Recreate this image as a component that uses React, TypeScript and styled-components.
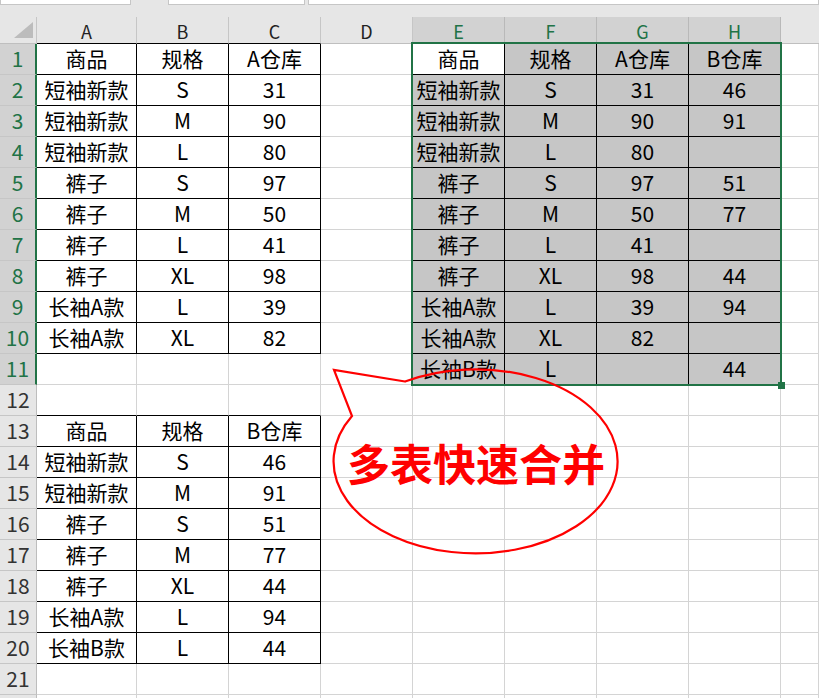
import React from "react";
import styled, { createGlobalStyle } from "styled-components";

const GREEN = "#217346";
const GRID = "#d4d4d4";
const FONT = `"Noto Sans CJK SC", "Noto Sans", sans-serif`;

const Global = createGlobalStyle`
  html, body { margin: 0; padding: 0; background: #fff; overflow: hidden; }
  body { font-family: ${FONT}; }
`;

const Page = styled.div`
  position: relative;
  width: 819px;
  height: 698px;
  overflow: hidden;
  background: #e6e6e6;
`;

const TopStrip = styled.div`
  display: flex;
  height: 17px;
  background: #e6e6e6;
`;

const InputBox = styled.div<{ $w: string; $ml: number }>`
  box-sizing: border-box;
  flex: ${(p) => (p.$w === "fill" ? "1" : `0 0 ${p.$w}`)};
  margin-left: ${(p) => p.$ml}px;
  height: 5px;
  background: #fff;
  border: 1px solid #c6c6c6;
  border-top: none;
`;

const Sheet = styled.div`
  display: grid;
  grid-template-columns: 37px 100px repeat(7, 92px) 1fr;
  grid-template-rows: 27px repeat(22, 31px);
  background: #fff;
`;

const Corner = styled.div`
  box-sizing: border-box;
  display: flex;
  align-items: flex-end;
  justify-content: flex-end;
  padding: 0 3px 5px 0;
  background: #e6e6e6;
  border-right: 1px solid #c6c6c6;
  border-bottom: 1px solid #bfbfbf;
`;

const CornerTriangle = styled.div`
  width: 0;
  height: 0;
  border-left: 19px solid transparent;
  border-bottom: 16px solid #bcbcbc;
`;

const ColHead = styled.div<{ $sel: boolean; $bb: boolean; $edge: boolean }>`
  box-sizing: border-box;
  display: flex;
  align-items: center;
  justify-content: center;
  background: ${(p) => (p.$sel ? "#d2d2d2" : "#e6e6e6")};
  color: ${(p) => (p.$sel ? GREEN : "#222")};
  border-right: ${(p) => (p.$edge ? "none" : `1px solid ${p.$sel ? "#b9b9b9" : "#c6c6c6"}`)};
  border-bottom: 1px solid ${(p) => (p.$bb ? "#000" : "#bfbfbf")};
  font-size: 18px;
  line-height: 1;
  padding-top: 2px;
`;

const RowHead = styled.div<{ $sel: boolean }>`
  box-sizing: border-box;
  display: flex;
  align-items: center;
  justify-content: center;
  background: ${(p) => (p.$sel ? "#d2d2d2" : "#e6e6e6")};
  color: ${(p) => (p.$sel ? GREEN : "#333")};
  border-right: ${(p) => (p.$sel ? `2px solid ${GREEN}` : "1px solid #bdbdbd")};
  border-bottom: 1px solid #c6c6c6;
  font-size: 21px;
  line-height: 1;
  padding-bottom: 1px;
`;

type Fill = "none" | "sel" | "active";

const Cell = styled.div<{ $rb: boolean; $bb: boolean; $fill: Fill }>`
  box-sizing: border-box;
  display: flex;
  align-items: center;
  justify-content: center;
  overflow: hidden;
  white-space: nowrap;
  border-right: 1px solid ${(p) => (p.$rb ? "#000" : GRID)};
  border-bottom: 1px solid ${(p) => (p.$bb ? "#000" : GRID)};
  background: ${(p) => (p.$fill === "sel" ? "#c6c6c6" : "#fff")};
  color: #000;
  font-size: 21px;
  line-height: 1;
  padding-bottom: 2px;
`;

const Selection = styled.div`
  position: absolute;
  left: 411px;
  top: 42px;
  width: 371px;
  height: 344px;
  box-sizing: border-box;
  border: 2px solid ${GREEN};
  pointer-events: none;
`;

const FillHandle = styled.div`
  position: absolute;
  right: -5px;
  bottom: -5px;
  width: 7px;
  height: 7px;
  background: ${GREEN};
`;

const Callout = styled.div`
  position: absolute;
  left: 330px;
  top: 365px;
  width: 292px;
  height: 192px;
  pointer-events: none;
`;

const CalloutShape = styled.svg`
  position: absolute;
  inset: 0;
  overflow: visible;
`;

const CalloutLabel = styled.div`
  position: absolute;
  left: 0;
  right: 0;
  top: 74px;
  display: flex;
  justify-content: center;
  color: #ff0000;
  font-size: 43px;
  font-weight: 700;
  line-height: 46px;
  white-space: nowrap;
`;

const COLS = ["A", "B", "C", "D", "E", "F", "G", "H", ""];

const t1 = [
  ["商品", "规格", "A仓库"],
  ["短袖新款", "S", "31"],
  ["短袖新款", "M", "90"],
  ["短袖新款", "L", "80"],
  ["裤子", "S", "97"],
  ["裤子", "M", "50"],
  ["裤子", "L", "41"],
  ["裤子", "XL", "98"],
  ["长袖A款", "L", "39"],
  ["长袖A款", "XL", "82"],
];

const t2 = [
  ["商品", "规格", "B仓库"],
  ["短袖新款", "S", "46"],
  ["短袖新款", "M", "91"],
  ["裤子", "S", "51"],
  ["裤子", "M", "77"],
  ["裤子", "XL", "44"],
  ["长袖A款", "L", "94"],
  ["长袖B款", "L", "44"],
];

const t3 = [
  ["商品", "规格", "A仓库", "B仓库"],
  ["短袖新款", "S", "31", "46"],
  ["短袖新款", "M", "90", "91"],
  ["短袖新款", "L", "80", ""],
  ["裤子", "S", "97", "51"],
  ["裤子", "M", "50", "77"],
  ["裤子", "L", "41", ""],
  ["裤子", "XL", "98", "44"],
  ["长袖A款", "L", "39", "94"],
  ["长袖A款", "XL", "82", ""],
  ["长袖B款", "L", "", "44"],
];

const inT1 = (r: number, c: number) => r >= 1 && r <= 10 && c >= 0 && c <= 2;
const inT2 = (r: number, c: number) => r >= 13 && r <= 20 && c >= 0 && c <= 2;
const inT3 = (r: number, c: number) => r >= 1 && r <= 11 && c >= 4 && c <= 7;
const inTable = (r: number, c: number) => inT1(r, c) || inT2(r, c) || inT3(r, c);

const valueAt = (r: number, c: number): string => {
  if (inT1(r, c)) return t1[r - 1][c];
  if (inT2(r, c)) return t2[r - 13][c];
  if (inT3(r, c)) return t3[r - 1][c - 4];
  return "";
};

const isSelRow = (r: number) => r >= 1 && r <= 11;
const isSelCol = (c: number) => c >= 4 && c <= 7;

export default function App() {
  const rows = Array.from({ length: 22 }, (_, i) => i + 1);
  return (
    <>
      <Global />
      <Page>
        <TopStrip>
          <InputBox $w="131px" $ml={0} />
          <InputBox $w="137px" $ml={37} />
          <InputBox $w="fill" $ml={3} />
        </TopStrip>
        <Sheet>
          <Corner>
            <CornerTriangle />
          </Corner>
          {COLS.map((l, c) => (
            <ColHead key={"h" + c} $sel={isSelCol(c)} $bb={inTable(1, c)} $edge={c === 8}>
              {l}
            </ColHead>
          ))}
          {rows.map((r) => (
            <React.Fragment key={r}>
              <RowHead $sel={isSelRow(r)}>{r <= 21 ? r : ""}</RowHead>
              {COLS.map((_, c) => {
                const fill: Fill = inT3(r, c) ? (r === 1 && c === 4 ? "active" : "sel") : "none";
                return (
                  <Cell
                    key={"c" + r + "-" + c}
                    $rb={inTable(r, c) || inTable(r, c + 1)}
                    $bb={inTable(r, c) || inTable(r + 1, c)}
                    $fill={fill}
                  >
                    {valueAt(r, c)}
                  </Cell>
                );
              })}
            </React.Fragment>
          ))}
        </Sheet>
        <Selection>
          <FillHandle />
        </Selection>
        <Callout>
          <CalloutShape width="292" height="192" viewBox="330 365 292 192">
            <path
              d="M 405 381.5 L 334 370 L 352 416 A 142 92 0 1 0 405 381.5 Z"
              fill="none"
              stroke="#ff0000"
              strokeWidth="2.2"
              strokeLinejoin="miter"
            />
          </CalloutShape>
          <CalloutLabel>多表快速合并</CalloutLabel>
        </Callout>
      </Page>
    </>
  );
}
